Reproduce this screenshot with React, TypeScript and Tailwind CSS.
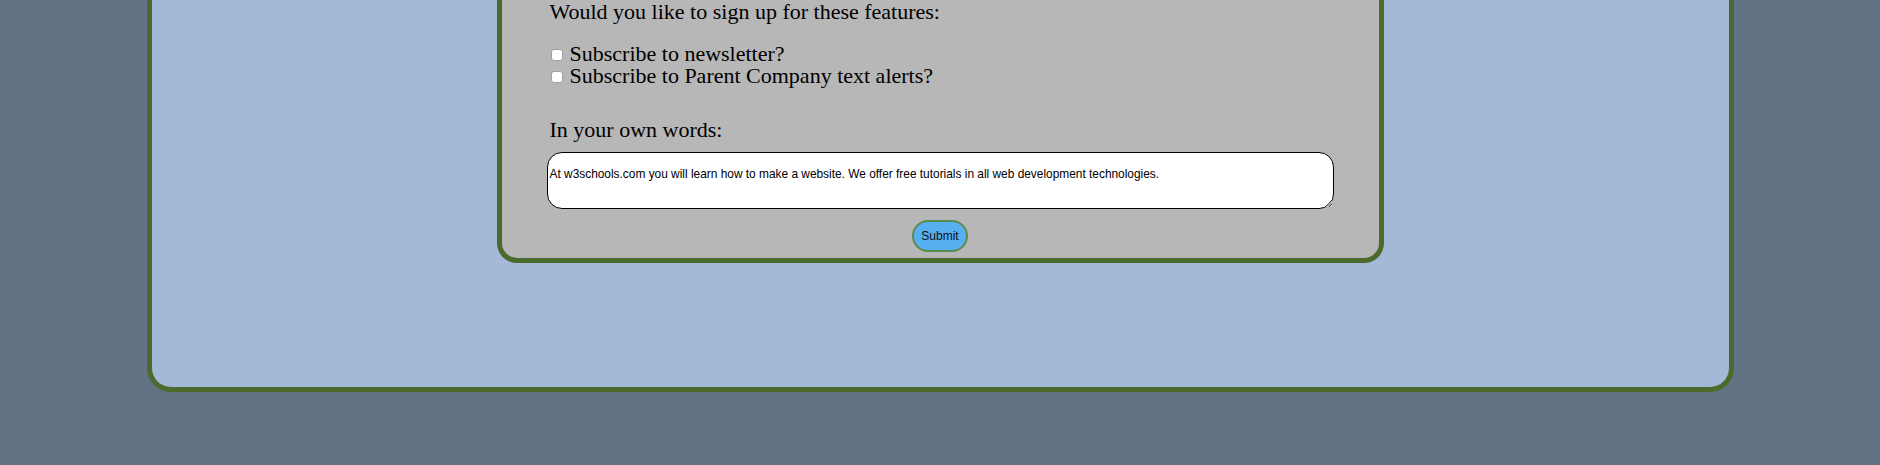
import React from 'react';

const serif = { fontFamily: '"Liberation Serif", Georgia, serif' };
const sans = { fontFamily: '"Liberation Sans", Arial, sans-serif' };

export default function App() {
  return (
    <div className="h-[465px] w-full overflow-hidden bg-[#627385]">
      {/* outer panel, top edge scrolled out of view */}
      <div className="mx-auto h-[392px] w-[1587px] rounded-b-[24px] border-x-[5px] border-b-[5px] border-[#4b6a2c] bg-[#a4b9d8]">
        {/* form card */}
        <div className="mx-auto w-[887px] rounded-b-[20px] border-x-[5px] border-b-[5px] border-[#4b6a2c] bg-[#b7b7b7] px-[45px] pb-[6px] pt-[1px] text-black">
          <p className="pl-[3px] text-[22px] leading-[22px]" style={serif}>
            Would you like to sign up for these features:
          </p>

          <div className="mt-[20px] flex flex-col text-[22px] leading-[22px]" style={serif}>
            <label className="flex items-end">
              <input
                type="checkbox"
                className="mb-[4px] ml-[4px] h-[12px] w-[12px] appearance-none rounded-[3px] border border-[#a0a0a0] bg-white"
              />
              <span className="ml-[7px]">Subscribe to newsletter?</span>
            </label>
            <label className="flex items-end">
              <input
                type="checkbox"
                className="mb-[4px] ml-[4px] h-[12px] w-[12px] appearance-none rounded-[3px] border border-[#a0a0a0] bg-white"
              />
              <span className="ml-[7px]">Subscribe to Parent Company text alerts?</span>
            </label>
          </div>

          <p className="mt-[32px] pl-[3px] text-[22px] leading-[22px]" style={serif}>
            In your own words:
          </p>

          <textarea
            className="mt-[11px] block h-[57px] w-full rounded-[15px] border border-black bg-white pl-[2px] pt-[14px] text-[11.9px] leading-[14px] text-black outline-none"
            style={sans}
            defaultValue="At w3schools.com you will learn how to make a website. We offer free tutorials in all web development technologies."
          />

          <div className="mt-[11px] flex justify-center">
            <button
              className="h-[32px] w-[56px] rounded-full border-2 border-[#5d8b4c] bg-[#55aff0] text-[12px] text-[#111]"
              style={sans}
            >
              Submit
            </button>
          </div>
        </div>
      </div>
    </div>
  );
}
